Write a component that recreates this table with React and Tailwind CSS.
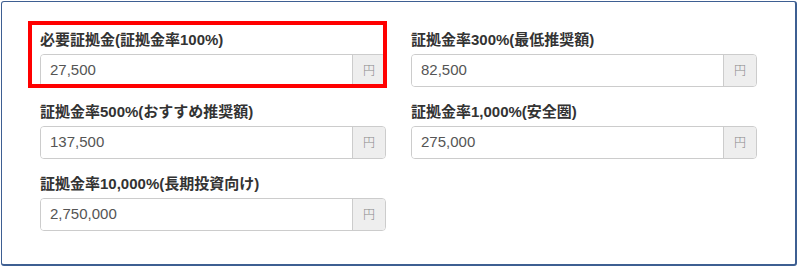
const fields = [
  { label: '必要証拠金(証拠金率100%)', value: '27,500', highlight: true },
  { label: '証拠金率300%(最低推奨額)', value: '82,500' },
  { label: '証拠金率500%(おすすめ推奨額)', value: '137,500' },
  { label: '証拠金率1,000%(安全圏)', value: '275,000' },
  { label: '証拠金率10,000%(長期投資向け)', value: '2,750,000' },
];

function YenField({ label, value, highlight }) {
  return (
    <div className="relative">
      {highlight && (
        <div className="pointer-events-none absolute -left-[12px] -top-[9px] -right-[1px] -bottom-[1px] border-4 border-[#ff0000] z-10"></div>
      )}
      <label className="block h-5 mb-1 text-[15px] leading-5 font-bold text-[#333]">{label}</label>
      <div className="flex h-[33px] rounded-[4px] border border-[#ccc] shadow-[inset_0_1px_1px_rgba(0,0,0,0.075)] overflow-hidden">
        <input
          readOnly
          value={value}
          className="flex-1 min-w-0 pl-[9px] text-[15px] text-[#555] bg-white outline-none"
        />
        <span className="w-[33px] flex items-center justify-center bg-[#eee] border-l border-[#ccc] text-[12px] font-light text-[#888]">円</span>
      </div>
    </div>
  );
}

export default function App() {
  return (
    <div className="pl-px pt-px" style={{ fontFamily: '"Liberation Sans", "Noto Sans CJK JP", sans-serif' }}>
      <div className="w-[796px] h-[265px] bg-white border-l border-t border-r-2 border-b-2 border-[#3e5f92] rounded-[3px] pl-[38px] pt-[28px]">
        <div className="grid grid-cols-[346px_346px] gap-x-[25px] gap-y-[15px]">
          {fields.map(f => (
            <YenField key={f.label} {...f} />
          ))}
        </div>
      </div>
    </div>
  );
}
